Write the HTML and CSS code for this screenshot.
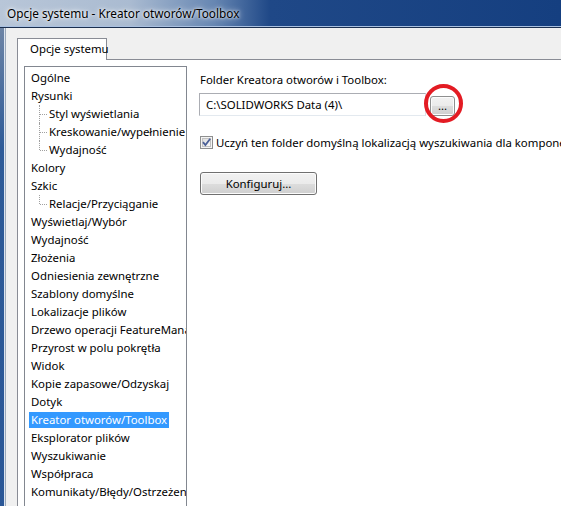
FILE: index.html
```html
<!DOCTYPE html>
<html lang="pl">
<head>
<meta charset="utf-8">
<title>Opcje systemu - Kreator otworów/Toolbox</title>
<link rel="stylesheet" href="styles.css">
</head>
<body>
<div class="window">
  <div class="titlebar"><span class="title">Opcje systemu - Kreator otworów/Toolbox</span></div>
  <div class="frame">
    <div class="frame-edge"></div>
    <div class="client">
      <div class="tabs"><div class="tab">Opcje systemu</div></div>
      <div class="panel">
        <ul class="tree">
          <li>Ogólne</li>
          <li>Rysunki</li>
          <li class="child">Styl wyświetlania</li>
          <li class="child">Kreskowanie/wypełnienie</li>
          <li class="child last">Wydajność</li>
          <li>Kolory</li>
          <li>Szkic</li>
          <li class="child last">Relacje/Przyciąganie</li>
          <li>Wyświetlaj/Wybór</li>
          <li>Wydajność</li>
          <li>Złożenia</li>
          <li>Odniesienia zewnętrzne</li>
          <li>Szablony domyślne</li>
          <li>Lokalizacje plików</li>
          <li>Drzewo operacji FeatureManager</li>
          <li>Przyrost w polu pokrętła</li>
          <li>Widok</li>
          <li>Kopie zapasowe/Odzyskaj</li>
          <li>Dotyk</li>
          <li><span class="selected">Kreator otworów/Toolbox</span></li>
          <li>Eksplorator plików</li>
          <li>Wyszukiwanie</li>
          <li>Współpraca</li>
          <li>Komunikaty/Błędy/Ostrzeżenia</li>
        </ul>
        <div class="options">
          <div class="label">Folder Kreatora otworów i Toolbox:</div>
          <div class="path-row">
            <div class="path-input">C:\SOLIDWORKS Data (4)\</div>
            <div class="browse-wrap">
              <button class="btn browse">...</button>
              <span class="ring"></span>
            </div>
          </div>
          <div class="check-row">
            <svg class="checkbox" width="13" height="13" viewBox="0 0 13 13">
              <defs>
                <linearGradient id="cbg" x1="0" y1="0" x2="1" y2="1">
                  <stop offset="0" stop-color="#dcdcdc"/>
                  <stop offset="1" stop-color="#fbfbfb"/>
                </linearGradient>
              </defs>
              <rect x="0.5" y="0.5" width="12" height="12" fill="#f4f4f4" stroke="#8e8f8f"/>
              <rect x="2.5" y="2.5" width="8" height="8" fill="url(#cbg)" stroke="#c2c2c2"/>
              <path d="M3 6.2 L5.4 9 L10.2 2.8" fill="none" stroke="#4a5f97" stroke-width="1.8"/>
            </svg>
            <span class="check-label">Uczyń ten folder domyślną lokalizacją wyszukiwania dla komponentów</span>
          </div>
          <button class="btn config">Konfiguruj...</button>
        </div>
      </div>
    </div>
  </div>
</div>
</body>
</html>
```

FILE: styles.css
```css
html, body {
  margin: 0;
  padding: 0;
  width: 561px;
  height: 506px;
  overflow: hidden;
  background: #f0f0f0;
  font-family: "Noto Sans", "Open Sans", sans-serif;
  font-size: 11.4px;
  color: #000;
}

.window {
  width: 561px;
  height: 506px;
  display: flex;
  flex-direction: column;
  overflow: hidden;
}

.titlebar {
  height: 26px;
  flex: none;
  display: flex;
  align-items: center;
  padding-left: 7px;
  background: linear-gradient(90deg, #b8c6d8 0px, #aabbd1 130px, #6686b2 215px, #1f4887 270px, #153f80 561px);
  border-bottom: 1px solid #a9c0e0;
  box-shadow: 0 1px 0 #1b2f4f;
  position: relative;
  z-index: 1;
}

.title {
  font-size: 11.8px;
  color: #000;
  text-shadow: 0 0 6px #ffffff, 0 0 3px #ffffff;
}

.frame {
  flex: 1;
  display: flex;
  min-height: 0;
  margin-top: 1px;
}

.frame-edge {
  width: 4px;
  flex: none;
  background: linear-gradient(180deg, #6e85a6 0px, #2e5b98 120px, #2a5797 506px);
  border-right: 1px solid #dde5ef;
  box-shadow: 1px 0 0 #9aa8ba;
  margin-right: 1px;
}

.client {
  flex: 1;
  background: #f0f0f0;
  padding: 10px 0 0 11px;
  display: flex;
  flex-direction: column;
  min-width: 0;
}

.tabs {
  display: flex;
  height: 21px;
  flex: none;
}

.tab {
  width: 90px;
  height: 22px;
  background: #ffffff;
  border: 1px solid #898c95;
  border-bottom: none;
  box-sizing: border-box;
  padding-left: 12px;
  line-height: 20px;
  white-space: nowrap;
  position: relative;
  z-index: 1;
  margin-bottom: -1px;
}

.panel {
  flex: 1;
  background: #ffffff;
  border-top: 1px solid #898c95;
  border-left: 1px solid #898c95;
  display: flex;
  padding: 6px 0 0 6px;
  min-height: 0;
  gap: 12px;
}

.tree {
  list-style: none;
  margin: 0;
  padding: 2px 0 0 6px;
  width: 155px;
  flex: none;
  border: 1px solid #828790;
  border-bottom: none;
  overflow: hidden;
  white-space: nowrap;
}

.tree li {
  height: 18px;
  line-height: 18px;
  position: relative;
}

.tree li.child {
  padding-left: 18px;
}

.tree li.child::before {
  content: "";
  position: absolute;
  left: 8px;
  top: 0;
  height: 18px;
  border-left: 1px dotted #a0a0a0;
}

.tree li.child.last::before {
  height: 9px;
}

.tree li.child::after {
  content: "";
  position: absolute;
  left: 9px;
  top: 9px;
  width: 7px;
  border-top: 1px dotted #a0a0a0;
}

.selected {
  background: #3399ff;
  color: #ffffff;
  display: inline-block;
  line-height: 16px;
  padding: 0 2px;
  margin-left: -2px;
}

.options {
  display: flex;
  flex-direction: column;
  align-items: flex-start;
  padding-top: 6px;
  min-width: 0;
  flex: 1;
  white-space: nowrap;
}

.label {
  line-height: 16px;
  padding-left: 1px;
}

.path-row {
  display: flex;
  align-items: center;
  gap: 4px;
  margin-top: 5px;
}

.path-input {
  width: 219px;
  height: 21px;
  border: 1px solid #abadb3;
  border-bottom-color: #e3e9ef;
  border-right-color: #dbdfe6;
  line-height: 21px;
  padding-left: 6px;
  background: #fff;
}

.browse-wrap {
  position: relative;
  display: flex;
}

.btn {
  font-family: inherit;
  font-size: 11.4px;
  color: #000;
  border: 1px solid #707070;
  border-radius: 3px;
  background: linear-gradient(180deg, #f2f2f2 0%, #ebebeb 50%, #dddddd 51%, #cfcfcf 100%);
  box-shadow: inset 0 0 0 1px #fcfcfc;
  padding: 0;
  margin: 0;
}

.browse {
  width: 25px;
  height: 20px;
  line-height: 14px;
  border-color: #8e8f8f;
  margin-top: 2px;
}

.ring {
  position: absolute;
  left: -6px;
  top: -10px;
  width: 31px;
  height: 31px;
  border: 4px solid #e31b23;
  border-radius: 50%;
}

.check-row {
  display: flex;
  align-items: center;
  gap: 3px;
  margin-top: 18px;
  padding-left: 1px;
  height: 16px;
}

.checkbox {
  flex: none;
}

.config {
  margin-top: 22px;
  margin-left: 1px;
  width: 117px;
  height: 23px;
}
```
